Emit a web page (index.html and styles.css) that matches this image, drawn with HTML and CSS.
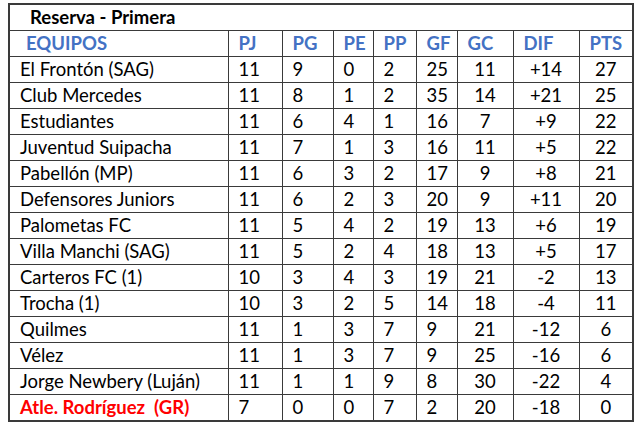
FILE: index.html
```html
<!DOCTYPE html>
<html lang="es">
<head>
<meta charset="utf-8">
<link rel="stylesheet" href="styles.css">
</head>
<body>
<table class="standings">
  <colgroup>
    <col class="c-team"><col class="c-pj"><col class="c-pg"><col class="c-pe"><col class="c-pp"><col class="c-gf"><col class="c-gc"><col class="c-dif"><col class="c-pts">
  </colgroup>
  <tr class="title"><td colspan="9">Reserva - Primera</td></tr>
  <tr class="head">
    <td class="team">EQUIPOS</td><td>PJ</td><td>PG</td><td>PE</td><td>PP</td><td>GF</td><td>GC</td><td>DIF</td><td>PTS</td>
  </tr>
  <tr><td class="team">El Frontón (SAG)</td><td>11</td><td>9</td><td>0</td><td>2</td><td>25</td><td class="ctr">11</td><td class="ctr">+14</td><td class="ctr">27</td></tr>
  <tr><td class="team">Club Mercedes</td><td>11</td><td>8</td><td>1</td><td>2</td><td>35</td><td class="ctr">14</td><td class="ctr">+21</td><td class="ctr">25</td></tr>
  <tr><td class="team">Estudiantes</td><td>11</td><td>6</td><td>4</td><td>1</td><td>16</td><td class="ctr">7</td><td class="ctr">+9</td><td class="ctr">22</td></tr>
  <tr><td class="team">Juventud Suipacha</td><td>11</td><td>7</td><td>1</td><td>3</td><td>16</td><td class="ctr">11</td><td class="ctr">+5</td><td class="ctr">22</td></tr>
  <tr><td class="team">Pabellón (MP)</td><td>11</td><td>6</td><td>3</td><td>2</td><td>17</td><td class="ctr">9</td><td class="ctr">+8</td><td class="ctr">21</td></tr>
  <tr><td class="team">Defensores Juniors</td><td>11</td><td>6</td><td>2</td><td>3</td><td>20</td><td class="ctr">9</td><td class="ctr">+11</td><td class="ctr">20</td></tr>
  <tr><td class="team">Palometas FC</td><td>11</td><td>5</td><td>4</td><td>2</td><td>19</td><td class="ctr">13</td><td class="ctr">+6</td><td class="ctr">19</td></tr>
  <tr><td class="team">Villa Manchi (SAG)</td><td>11</td><td>5</td><td>2</td><td>4</td><td>18</td><td class="ctr">13</td><td class="ctr">+5</td><td class="ctr">17</td></tr>
  <tr><td class="team">Carteros FC (1)</td><td>10</td><td>3</td><td>4</td><td>3</td><td>19</td><td class="ctr">21</td><td class="ctr">-2</td><td class="ctr">13</td></tr>
  <tr><td class="team">Trocha (1)</td><td>10</td><td>3</td><td>2</td><td>5</td><td>14</td><td class="ctr">18</td><td class="ctr">-4</td><td class="ctr">11</td></tr>
  <tr><td class="team">Quilmes</td><td>11</td><td>1</td><td>3</td><td>7</td><td>9</td><td class="ctr">21</td><td class="ctr">-12</td><td class="ctr">6</td></tr>
  <tr><td class="team">Vélez</td><td>11</td><td>1</td><td>3</td><td>7</td><td>9</td><td class="ctr">25</td><td class="ctr">-16</td><td class="ctr">6</td></tr>
  <tr><td class="team">Jorge Newbery (Luján)</td><td>11</td><td>1</td><td>1</td><td>9</td><td>8</td><td class="ctr">30</td><td class="ctr">-22</td><td class="ctr">4</td></tr>
  <tr><td class="team out">Atle. Rodríguez&nbsp; (GR)</td><td>7</td><td>0</td><td>0</td><td>7</td><td>2</td><td class="ctr">20</td><td class="ctr">-18</td><td class="ctr">0</td></tr>
</table>
</body>
</html>
```
FILE: styles.css
```css
html, body {
  margin: 0;
  padding: 0;
  background: #ffffff;
}
body {
  padding: 3px 0 0 8px;
}
.standings {
  border-collapse: collapse;
  table-layout: fixed;
  width: 626px;
  font-family: "Lato", "Liberation Sans", sans-serif;
  font-size: 18.5px;
  color: #000;
  border: 2px solid #3a3a3a;
}
.c-team { width: 219px; }
.c-pj { width: 54px; }
.c-pg { width: 51px; }
.c-pe { width: 40px; }
.c-pp { width: 43px; }
.c-gf { width: 41px; }
.c-gc { width: 56px; }
.c-dif { width: 66px; }
.c-pts { width: 54px; }
.standings td {
  height: 25px;
  padding: 0 0 0 10px;
  border: 1px solid #3a3a3a;
  white-space: nowrap;
  line-height: 25px;
  vertical-align: middle;
}
.title td {
  font-weight: 700;
  padding-left: 20px;
}
.head td {
  font-weight: 700;
  color: #4472c4;
}
.head td.team {
  padding-left: 16px;
}
.standings td.ctr {
  text-align: center;
  padding: 0;
}
.out {
  color: #ff0000;
  font-weight: 700;
}
```
